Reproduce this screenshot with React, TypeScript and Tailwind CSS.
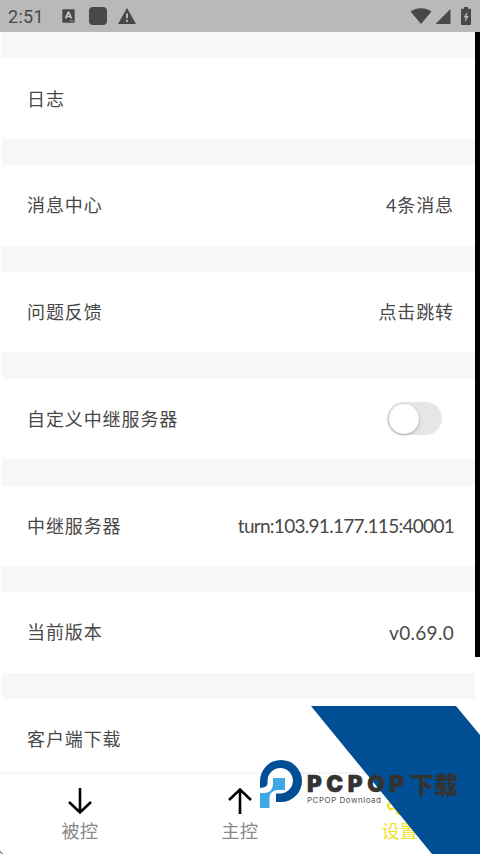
import React from 'react';
import clsx from 'clsx';

interface SettingRow {
  label: string;
  value?: string;
  valueClass?: string;
  toggle?: boolean;
}

const rows: SettingRow[] = [
  { label: '日志' },
  { label: '消息中心', value: '4条消息', valueClass: 'tracking-[0.9px]' },
  { label: '问题反馈', value: '点击跳转', valueClass: 'tracking-[0.9px]' },
  { label: '自定义中继服务器', toggle: true },
  { label: '中继服务器', value: 'turn:103.91.177.115:40001', valueClass: 'text-[19px] tracking-[-0.72px]' },
  { label: '当前版本', value: 'v0.69.0', valueClass: 'text-[19px] tracking-[0.3px]' },
];

const StatusBar: React.FC = () => (
  <header className="flex h-8 shrink-0 items-center justify-between bg-[#b9b9b9] pl-2 pr-[9px] text-[#484848]">
    <div className="flex items-center">
      <span className="w-[54px] pt-px font-['Roboto'] text-[18px] leading-8 tracking-[0.3px]">2:51</span>
      <svg className="mr-[14px]" width="13" height="14" viewBox="0 0 13 14">
        <rect x="0.3" y="0.3" width="12.4" height="13.4" rx="1" fill="currentColor" />
        <path d="M3.5 9.5 6.2 3.2h.6L9.5 9.5M4.6 7.5h3.8" fill="none" stroke="#c8c8c8" strokeWidth="1.6" />
        <path d="M7.5 11.8h4" stroke="#999" strokeWidth="1" />
      </svg>
      <span className="mr-[11px] h-[18px] w-[18px] rounded-[4px] bg-[#484848]" />
      <svg width="18" height="16" viewBox="0 0 18 16">
        <path d="M9 0 18 16H0Z" fill="currentColor" />
        <path d="M9 5.6v4.6M9 11.7v2" stroke="#c4c4c4" strokeWidth="1.8" />
      </svg>
    </div>
    <div className="flex items-center">
      <svg className="mr-[3px]" width="22" height="16" viewBox="0 0 22 16">
        <path d="M0.5 3.5C6.5-1 15.5-1 21.5 3.5L11 16Z" fill="currentColor" />
      </svg>
      <svg className="mr-[10px]" width="16" height="15" viewBox="0 0 16 15">
        <path d="M15.5 0V15H0.5Z" fill="currentColor" />
      </svg>
      <svg width="10" height="18" viewBox="0 0 10 18">
        <path d="M3 0h4v1.8h2.2q.8 0 .8.8V17.2q0 .8-.8.8H.8Q0 18 0 17.2V2.6Q0 1.8.8 1.8H3Z" fill="currentColor" />
        <path d="M6.5 4.5 2.5 10.5h2.2L3.7 15.5 7.8 9H5.6Z" fill="#b9b9b9" />
      </svg>
    </div>
  </header>
);

const Toggle: React.FC = () => (
  <button
    type="button"
    role="switch"
    aria-checked="false"
    className="mr-3 flex h-[33px] w-[55px] items-center rounded-full bg-[#e6e6e8] pl-[1.5px]"
  >
    <span className="h-[30px] w-[30px] rounded-full bg-white shadow-[0_1px_3px_rgba(0,0,0,0.3)]" />
  </button>
);

const Row: React.FC<SettingRow> = ({ label, value, valueClass, toggle }) => (
  <div className="flex h-[80.4px] shrink-0 items-center justify-between bg-white pl-[25px] pr-[21px]">
    <span className="pt-px tracking-[0.9px]">{label}</span>
    {value && <span className={clsx('pt-px', valueClass)}>{value}</span>}
    {toggle && <Toggle />}
  </div>
);

const Tab: React.FC<{ label: string; className: string; children: React.ReactNode }> = ({ label, className, children }) => (
  <div className={clsx('flex flex-1 flex-col items-center pt-[11px]', className)}>
    <div className="flex h-8 items-center">{children}</div>
    <span className="text-[18px] leading-7 tracking-[0.5px]">{label}</span>
  </div>
);

const Arrow: React.FC<{ up?: boolean }> = ({ up }) => (
  <svg className={clsx('text-black', up && 'rotate-180')} width="24" height="28" viewBox="0 0 24 28" fill="none" stroke="currentColor" strokeWidth="2.6">
    <path d="M12 1V26M1 15 12 25.5 23 15" />
  </svg>
);

const Brand: React.FC = () => (
  <div className="absolute bottom-0 left-[258px] h-[148px] w-[222px]">
    <svg className="absolute inset-0" width="222" height="148" viewBox="0 0 222 148">
      <path d="M53 0H198L222 29V148H174Z" fill="#004f94" />
    </svg>
    <div className="relative flex pt-[53px]">
      <svg className="ml-[1px] shrink-0" width="45" height="50" viewBox="0 0 45 50">
        <circle cx="22" cy="22" r="15" fill="#fff" />
        <path d="M1 29V22A21 21 0 1 1 22 43H17V34.5H21A12.7 12.7 0 1 0 8.5 22V25Q8 28.5 1 29Z" fill="#004f94" />
        <path d="M14 19H26V31H18.5Q11 32 10.5 38V49H1V34H6Q13 33.5 14 26Z" fill="#3fa9e5" />
      </svg>
      <div className="ml-[3px] pt-[13px] text-[#333]">
        <div className="flex h-[23px] items-center whitespace-nowrap leading-[22px]">
          <span className="w-[103px] font-['Inter'] text-[22.5px] font-black leading-[22px] tracking-[4.6px] [-webkit-text-stroke:0.6px_#333]">PCPOP</span>
          <span className="font-['Noto_Sans_CJK_SC',sans-serif] text-[24px] font-black leading-[22px]">下载</span>
        </div>
        <div className="font-['Inter'] text-[8px] leading-[10px] tracking-[0.5px] text-[#555]">PCPOP Download</div>
      </div>
    </div>
  </div>
);

const App: React.FC = () => (
  <div className="relative flex h-[854px] w-[480px] flex-col overflow-hidden bg-white font-['Lato','Noto_Sans_CJK_SC',sans-serif] text-[18px] text-[#484848]">
    <StatusBar />
    <div className="flex h-[740px] shrink-0">
      <main className="ml-0.5 flex w-[473px] flex-col gap-[26.4px] overflow-hidden bg-[#f7f7f7] pt-[26.4px]">
        {rows.map((row) => (
          <Row key={row.label} {...row} />
        ))}
        <Row label="客户端下载" />
      </main>
      <div className="h-[625px] w-[5px] bg-black" />
    </div>
    <nav className="flex h-[82px] border-t-2 border-[#f5f5f5] bg-white">
      <Tab label="被控" className="text-[#888]">
        <Arrow />
      </Tab>
      <Tab label="主控" className="text-[#888]">
        <Arrow up />
      </Tab>
      <Tab label="设置" className="text-[#eedf2b]">
        <svg width="28" height="28" viewBox="0 0 28 28" fill="none" stroke="currentColor" strokeWidth="2">
          <circle cx="14" cy="14" r="4" />
          <path d="m11.5 2-.8 4-3 1.6L4 6.5 1.5 11l3 2.8v2L1.5 18 4 22.5l3.8-1.2 3 1.7.7 4h5l.8-4 3-1.7 3.8 1.2 2.4-4.5-3-2.6v-2l3-2.4L24 6.5l-3.7 1.1-3-1.6-.8-4Z" />
        </svg>
      </Tab>
    </nav>
    <svg className="absolute bottom-0 left-0" width="4" height="4" viewBox="0 0 4 4">
      <path d="M0 0Q.5 3 4 4H2.5Q.5 3.5 0 2Z" fill="#333" />
    </svg>
    <Brand />
  </div>
);

export default App;
